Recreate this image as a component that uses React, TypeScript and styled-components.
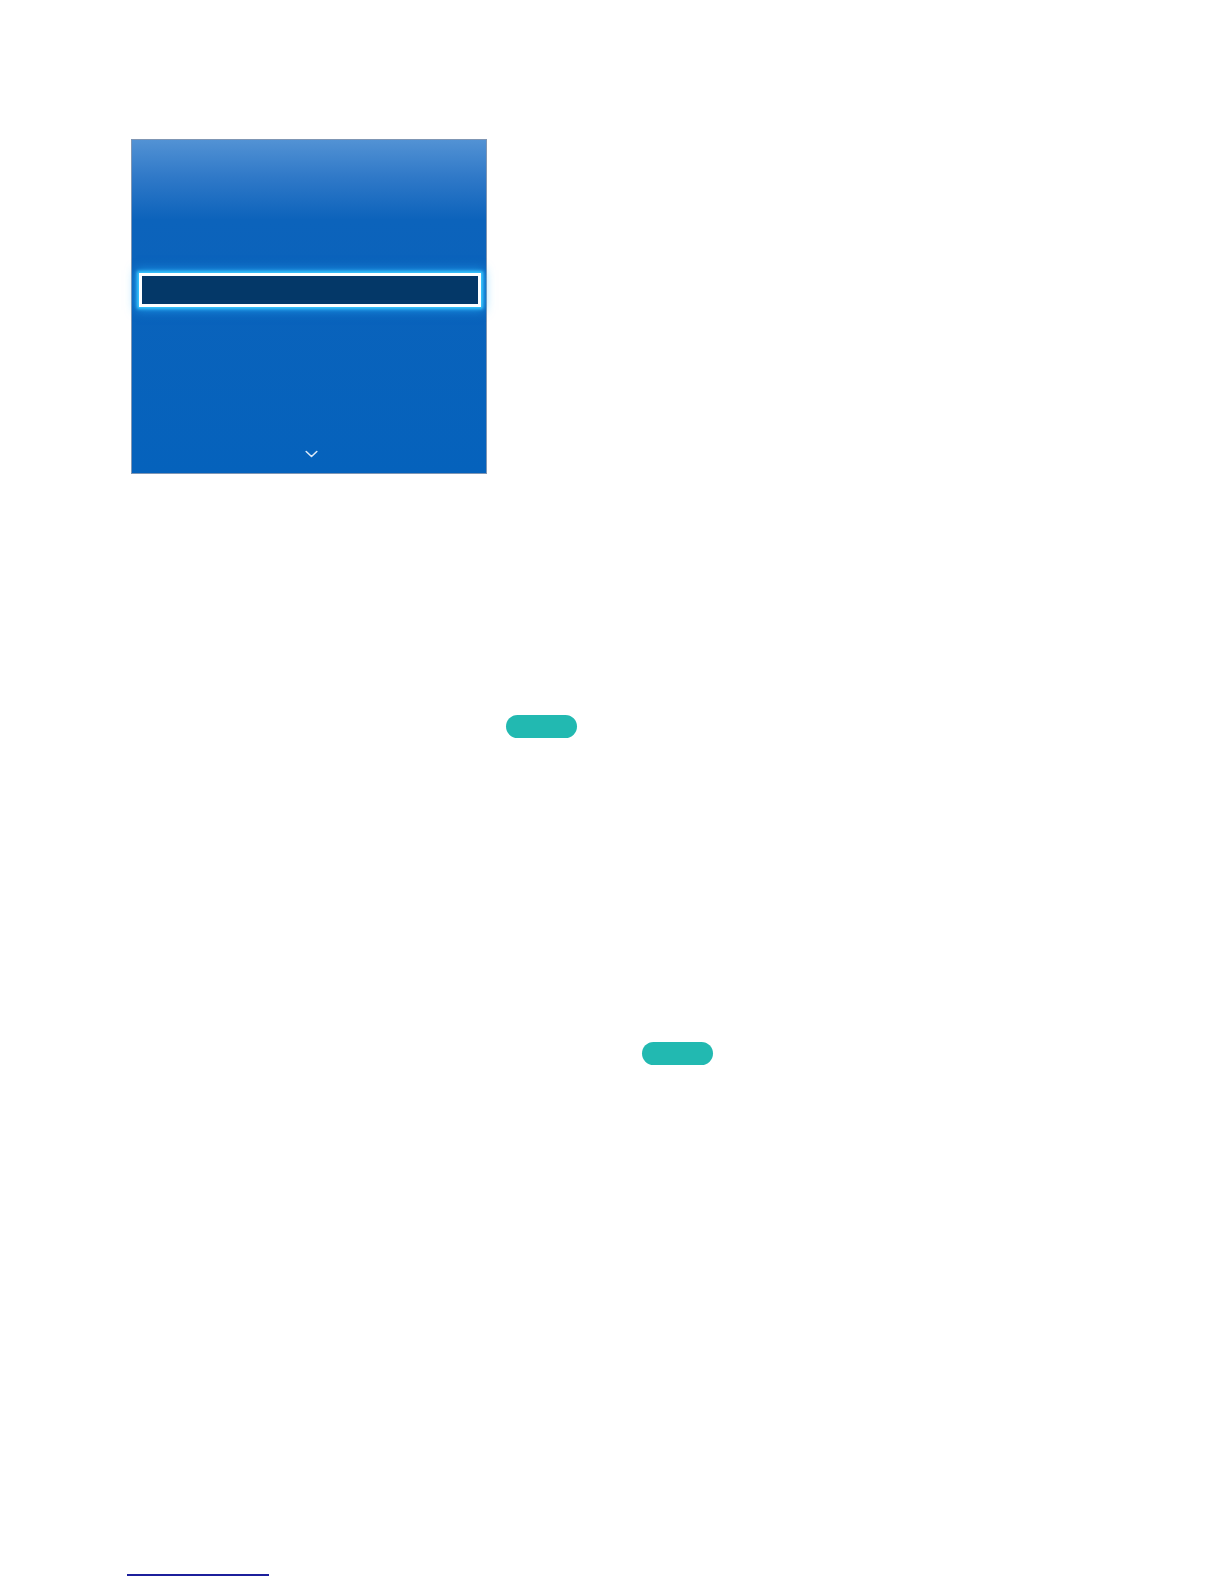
import styled, { createGlobalStyle } from "styled-components";

const GlobalStyle = createGlobalStyle`
  html, body {
    margin: 0;
    padding: 0;
    background: #ffffff;
    font-family: "Liberation Sans", Arial, sans-serif;
  }
`;

const Page = styled.div`
  width: 1224px;
  height: 1584px;
  box-sizing: border-box;
  padding: 139px 0 0 131px;
  display: flex;
  flex-direction: column;
`;

const Panel = styled.div`
  width: 356px;
  height: 335px;
  box-sizing: border-box;
  border: 1px solid #7f96b4;
  background: linear-gradient(
    to bottom,
    #5292d4 0%,
    #3079c8 11%,
    #0c63bb 24%,
    #0562bc 100%
  );
  display: flex;
  flex-direction: column;
  padding: 133px 5px 0 7px;
`;

const SelectedRow = styled.div`
  height: 34px;
  box-sizing: border-box;
  border: 3px solid #ffffff;
  background: #043868;
  box-shadow: 0 0 3px 2px #3ccaff, 0 0 10px 3px rgba(40, 175, 255, 0.65);
`;

const Chevron = styled.div`
  margin-top: auto;
  height: 23px;
  display: flex;
  justify-content: center;
  align-items: flex-start;
  padding-left: 3px;
  box-sizing: border-box;
`;

const PillRow = styled.div<{ $top: number; $left: number }>`
  margin-top: ${({ $top }) => $top}px;
  padding-left: ${({ $left }) => $left}px;
  display: flex;
`;

const Pill = styled.span`
  width: 71px;
  height: 23px;
  border-radius: 12px;
  background: #22b9b1;
`;

const FootRule = styled.div`
  margin-top: auto;
  margin-bottom: 8px;
  margin-left: -4px;
  width: 142px;
  height: 2px;
  background: #1c1f9c;
`;

export default function App() {
  return (
    <>
      <GlobalStyle />
      <Page>
        <Panel>
          <SelectedRow />
          <Chevron>
            <svg width="13" height="8" viewBox="0 0 13 8" fill="none">
              <path
                d="M1.2 1.5 L6.5 6.5 L11.8 1.5"
                stroke="#dbe9f8"
                strokeWidth="1.6"
                strokeLinecap="round"
                strokeLinejoin="round"
              />
            </svg>
          </Chevron>
        </Panel>
        <PillRow $top={241} $left={375}>
          <Pill />
        </PillRow>
        <PillRow $top={304} $left={511}>
          <Pill />
        </PillRow>
        <FootRule />
      </Page>
    </>
  );
}
